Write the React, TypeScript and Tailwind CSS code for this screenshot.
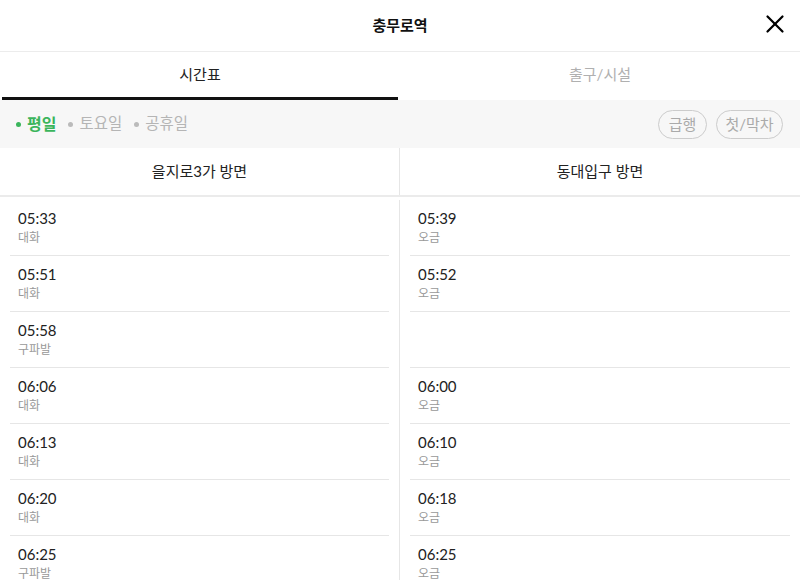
import { X } from 'lucide-react';

type Train = { time: string; dest: string } | null;

const left: Train[] = [
    { time: '05:33', dest: '대화' },
    { time: '05:51', dest: '대화' },
    { time: '05:58', dest: '구파발' },
    { time: '06:06', dest: '대화' },
    { time: '06:13', dest: '대화' },
    { time: '06:20', dest: '대화' },
    { time: '06:25', dest: '구파발' },
];

const right: Train[] = [
    { time: '05:39', dest: '오금' },
    { time: '05:52', dest: '오금' },
    null,
    { time: '06:00', dest: '오금' },
    { time: '06:10', dest: '오금' },
    { time: '06:18', dest: '오금' },
    { time: '06:25', dest: '오금' },
];

function TrainRow({ train }: { train: Train }) {
    return (
        <div className="h-[56px] border-b border-[#e6e6e6] px-2 pt-[9px]">
            {train && (
                <>
                    <div className="text-[15px] leading-[18px] text-[#222]">
                        {train.time}
                    </div>
                    <div className="mt-[2px] text-[12px] leading-[18px] text-[#999]">
                        {train.dest}
                    </div>
                </>
            )}
        </div>
    );
}

function Day({ label, active }: { label: string; active?: boolean }) {
    return (
        <div className="flex items-center gap-[6px]">
            <span
                className={
                    'h-[5px] w-[5px] rounded-full ' +
                    (active ? 'bg-[#3bb55c]' : 'bg-[#bbb]')
                }
            />
            <span
                className={
                    active
                        ? 'text-[16px] font-bold text-[#3bb55c]'
                        : 'text-[15.5px] text-[#b5b5b5]'
                }
            >
                {label}
            </span>
        </div>
    );
}

export default function App() {
    return (
        <div
            className="h-[580px] w-[800px] overflow-hidden bg-white"
            style={{ fontFamily: "Lato, 'Noto Sans CJK KR', sans-serif" }}
        >
            {/* 상단 헤더 */}
            <div className="relative flex h-[52px] items-center justify-center border-b border-[#ececec]">
                <span className="text-[15px] font-bold text-[#111]">충무로역</span>
                <X
                    className="absolute right-[10px] top-[9px] text-black"
                    size={30}
                    strokeWidth={1.8}
                />
            </div>

            {/* 탭 */}
            <div className="grid h-[48px] grid-cols-2">
                <div className="flex flex-col px-[2px]">
                    <div className="flex flex-1 items-center justify-center text-[15px] text-[#222]">
                        시간표
                    </div>
                    <div className="h-[3px] bg-[#111]" />
                </div>
                <div className="flex items-center justify-center pb-[3px] text-[15px] text-[#b0b0b0]">
                    출구/시설
                </div>
            </div>

            {/* 요일 필터 */}
            <div className="flex h-[48px] items-center justify-between bg-[#f7f7f7] pl-[16px] pr-[17px]">
                <div className="flex items-center gap-[12px]">
                    <Day label="평일" active />
                    <Day label="토요일" />
                    <Day label="공휴일" />
                </div>
                <div className="flex gap-[9px]">
                    <button className="h-[29px] w-[49px] rounded-full border-[1.5px] border-[#ccc] text-[15px] text-[#aaa]">
                        급행
                    </button>
                    <button className="h-[29px] w-[67px] rounded-full border-[1.5px] border-[#ccc] text-[15px] text-[#aaa]">
                        첫/막차
                    </button>
                </div>
            </div>

            {/* 방면 */}
            <div className="grid h-[49px] grid-cols-2 border-b-2 border-[#ebebeb] text-[15px] text-[#222]">
                <div className="flex items-center justify-center border-r border-[#e6e6e6]">
                    을지로3가 방면
                </div>
                <div className="flex items-center justify-center">동대입구 방면</div>
            </div>

            {/* 시간표 목록 */}
            <div className="grid grid-cols-2 pt-[3px]">
                <div className="border-r border-[#e6e6e6] px-[10px]">
                    {left.map((t, i) => (
                        <TrainRow key={i} train={t} />
                    ))}
                </div>
                <div className="px-[10px]">
                    {right.map((t, i) => (
                        <TrainRow key={i} train={t} />
                    ))}
                </div>
            </div>
        </div>
    );
}
